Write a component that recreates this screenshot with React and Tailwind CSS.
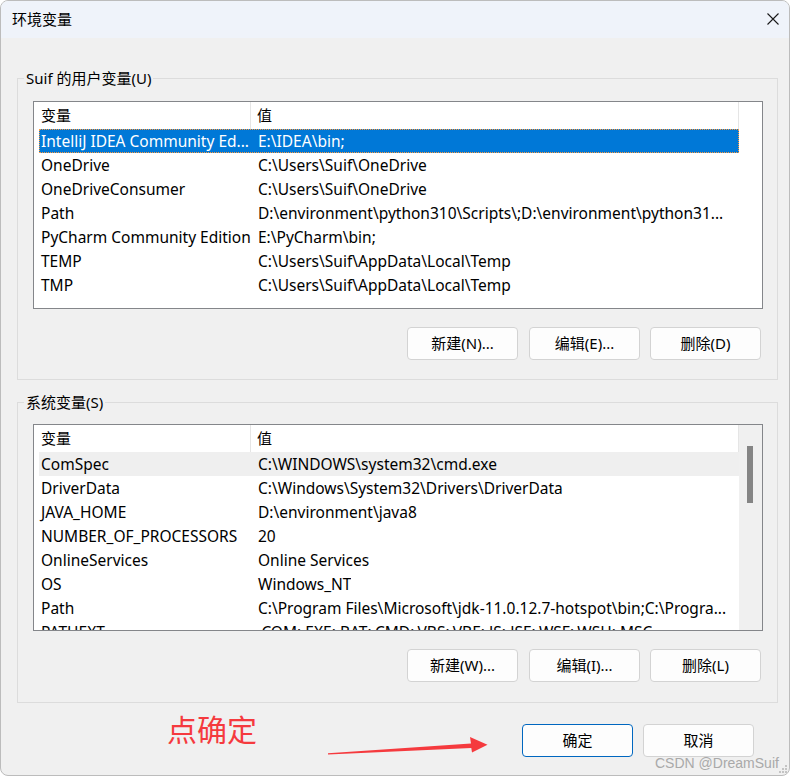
const userVars = [
  ["IntelliJ IDEA Community Ed...", "E:\\IDEA\\bin;"],
  ["OneDrive", "C:\\Users\\Suif\\OneDrive"],
  ["OneDriveConsumer", "C:\\Users\\Suif\\OneDrive"],
  ["Path", "D:\\environment\\python310\\Scripts\\;D:\\environment\\python31..."],
  ["PyCharm Community Edition", "E:\\PyCharm\\bin;"],
  ["TEMP", "C:\\Users\\Suif\\AppData\\Local\\Temp"],
  ["TMP", "C:\\Users\\Suif\\AppData\\Local\\Temp"],
];

const sysVars = [
  ["ComSpec", "C:\\WINDOWS\\system32\\cmd.exe"],
  ["DriverData", "C:\\Windows\\System32\\Drivers\\DriverData"],
  ["JAVA_HOME", "D:\\environment\\java8"],
  ["NUMBER_OF_PROCESSORS", "20"],
  ["OnlineServices", "Online Services"],
  ["OS", "Windows_NT"],
  ["Path", "C:\\Program Files\\Microsoft\\jdk-11.0.12.7-hotspot\\bin;C:\\Progra..."],
  ["PATHEXT", ".COM;.EXE;.BAT;.CMD;.VBS;.VBE;.JS;.JSE;.WSF;.WSH;.MSC"],
];

function Btn({ children, primary, className = "" }) {
  return (
    <button
      className={`h-[33px] w-[111px] shrink-0 rounded-[4px] border bg-[#fdfdfd] text-[15px] text-black ${
        primary ? "border-[#0067c0]" : "border-[#d3d3d3]"
      } ${className}`}
    >
      {children}
    </button>
  );
}

function VarList({ rows, heightClass, scroll, selected, hovered }) {
  return (
    <div className={`flex w-[730px] overflow-hidden border border-[#84868a] bg-white ${heightClass}`}>
      <div className="w-[705px] shrink-0">
        {/* header */}
        <div className="flex h-[27px] items-center border-r border-[#e5e5e5] text-[15px]">
          <div className="h-full w-[217px] border-r border-[#e5e5e5] pl-[7px] leading-[27px]">变量</div>
          <div className="pl-[6px]">值</div>
        </div>
        {rows.map(([name, val], i) => (
          <div
            key={i}
            className={`ml-[5px] flex h-[24px] w-[700px] items-center whitespace-nowrap pt-[2px] text-[15.5px] ${
              i === selected
                ? "bg-[#0078d7] text-white outline-1 -outline-offset-1 outline-dotted outline-[#ff9a3c]"
                : i === hovered
                ? "bg-[#efefef]"
                : ""
            }`}
          >
            <div className="w-[212px] shrink-0 overflow-hidden pl-[2px]">{name}</div>
            <div className="overflow-hidden pl-[7px]">{val}</div>
          </div>
        ))}
      </div>
      {scroll ? (
        <div className="flex-1 bg-[#f0f0f0]">
          <div className="ml-[8px] mt-[21px] h-[57px] w-[6px] bg-[#858585]" />
        </div>
      ) : (
        <div className="flex-1" />
      )}
    </div>
  );
}

export default function App() {
  return (
    <div className="relative h-[777px] w-[794px] overflow-hidden bg-white font-['Noto_Sans','Noto_Sans_CJK_SC',sans-serif] text-[15px] text-black">
      <div className="relative flex h-[776px] w-[790px] flex-col overflow-hidden rounded-[8px] border border-[#bcbcbc] bg-[#f0f0f0]">
        {/* title bar */}
        <div className="flex h-[37px] shrink-0 items-center justify-between bg-[#eff3fa] pl-[11px] pr-[10px]">
          <span className="text-[15px]">环境变量</span>
          <svg width="12" height="12" viewBox="0 0 12 12" className="mb-[1px]">
            <path d="M0.5 0.5 L11.5 11.5 M11.5 0.5 L0.5 11.5" stroke="#1a1a1a" strokeWidth="1.1" fill="none" />
          </svg>
        </div>

        <div className="pl-[16px]">
          {/* user variables */}
          <fieldset className="mt-[30px] w-[761px] border border-[#dcdcdc]">
            <legend className="ml-[6px] px-[2px] leading-[20px]">Suif 的用户变量(U)</legend>
            <div className="pl-[15px] pt-[13px] pb-[19px]">
              <VarList rows={userVars} heightClass="h-[208px]" selected={0} />
              <div className="mt-[18px] flex pl-[374px]">
                <Btn>新建(N)...</Btn>
                <Btn className="ml-[11px]">编辑(E)...</Btn>
                <Btn className="ml-[10px]">删除(D)</Btn>
              </div>
            </div>
          </fieldset>

          {/* system variables */}
          <fieldset className="mt-[12px] w-[761px] border border-[#dcdcdc]">
            <legend className="ml-[6px] px-[2px] leading-[20px]">系统变量(S)</legend>
            <div className="pl-[15px] pt-[12px] pb-[20px]">
              <VarList rows={sysVars} heightClass="h-[207px]" scroll hovered={0} />
              <div className="mt-[18px] flex pl-[374px]">
                <Btn>新建(W)...</Btn>
                <Btn className="ml-[11px]">编辑(I)...</Btn>
                <Btn className="ml-[10px]">删除(L)</Btn>
              </div>
            </div>
          </fieldset>

          <div className="mt-[21px] flex pl-[505px]">
            <Btn primary>确定</Btn>
            <Btn className="ml-[10px]">取消</Btn>
          </div>
        </div>

        {/* size grip */}
        <svg width="10" height="10" viewBox="0 0 10 10" className="absolute bottom-[1px] right-[1px]">
          <g fill="#c4c4c4">
            <rect x="7" y="1" width="2" height="2" />
            <rect x="4" y="4" width="2" height="2" />
            <rect x="7" y="4" width="2" height="2" />
            <rect x="1" y="7" width="2" height="2" />
            <rect x="4" y="7" width="2" height="2" />
            <rect x="7" y="7" width="2" height="2" />
          </g>
        </svg>
      </div>

      {/* annotation */}
      <div className="absolute left-[167px] top-[715px] text-[30px] leading-[30px] text-[#f53a3e]">点确定</div>
      <svg className="absolute left-0 top-0" width="794" height="777" viewBox="0 0 794 777">
        <polygon
          points="328,753.2 471,743.6 470,737 487.5,744.8 472,752.5 471.3,748 328,754.4"
          fill="#f53a3e"
        />
      </svg>
      <div className="absolute left-[655px] top-[753px] font-['Liberation_Sans',sans-serif] text-[14px] text-[#a9a9a9]">
        CSDN @DreamSuif
      </div>
    </div>
  );
}
